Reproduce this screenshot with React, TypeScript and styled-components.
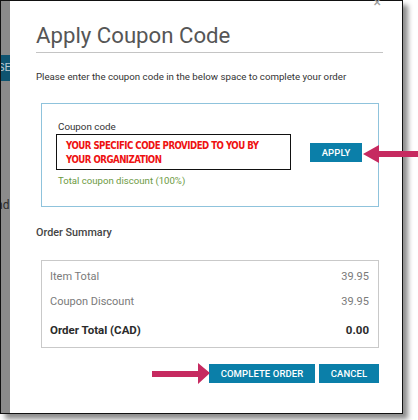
import React from "react";
import styled, { createGlobalStyle } from "styled-components";

const GlobalStyle = createGlobalStyle`
  html, body {
    margin: 0;
    padding: 0;
    background: #ffffff;
    width: 418px;
    height: 420px;
    overflow: hidden;
  }
  * { box-sizing: border-box; }
`;

const Frame = styled.div`
  position: relative;
  width: 403px;
  height: 414px;
  border: 1.5px solid #111;
  display: flex;
  box-shadow: 5px 5px 5px rgba(0, 0, 0, 0.45);
  font-family: Roboto, "Liberation Sans", sans-serif;
`;

const Backdrop = styled.div`
  width: 9px;
  flex-shrink: 0;
  background: #8b8b8b;
  display: flex;
  flex-direction: column;
  overflow: hidden;
`;

const BackdropTab = styled.div`
  margin-top: 54px;
  height: 26px;
  background: #0f5470;
  color: #b9c9d2;
  font-size: 11px;
  line-height: 26px;
  white-space: nowrap;
  text-indent: -3px;
`;

const BackdropText = styled.div`
  margin-top: 117px;
  color: #2a2a2a;
  font-size: 12px;
  white-space: nowrap;
  text-indent: -5px;
`;

const Modal = styled.div`
  position: relative;
  flex: 1;
  background: #fff;
  padding: 19px 19px 0 26px;
  display: flex;
  flex-direction: column;
`;

const Close = styled.span`
  position: absolute;
  top: -6px;
  right: 21px;
  color: #9a9a9a;
  font-size: 14px;
  line-height: 14px;
`;

const Title = styled.h1`
  margin: 0;
  font-size: 22.2px;
  line-height: 30px;
  font-weight: 400;
  color: #565656;
  padding-bottom: 2px;
  border-bottom: 1.5px solid #c4c4c4;
`;

const Lead = styled.p`
  margin: 17px 0 0;
  font-size: 9.7px;
  line-height: 14px;
  color: #333;
  white-space: nowrap;
`;

const CouponBox = styled.div`
  position: relative;
  margin: 19px 4px 0 5px;
  border: 1px solid #8fc3dc;
  padding: 16px 16px 18px 14px;
`;

const Label = styled.div`
  font-size: 9.8px;
  line-height: 14px;
  color: #333;
  padding-left: 2px;
`;

const InputRow = styled.div`
  display: flex;
  align-items: center;
  gap: 19px;
`;

const CodeField = styled.div`
  width: 235px;
  height: 36px;
  border: 1.5px solid #111;
  padding: 4px 0 0 9px;
  color: #ee1111;
  font-family: "DejaVu Sans Condensed", "Liberation Sans", sans-serif;
  font-weight: 700;
  font-size: 9.6px;
  line-height: 14px;
  letter-spacing: -0.5px;
  white-space: nowrap;
`;

const Button = styled.button<{ $w: number }>`
  width: ${(p) => p.$w}px;
  height: 19px;
  padding: 0;
  border: none;
  background: #0b7fa9;
  color: #fff;
  font-family: Roboto, "Liberation Sans", sans-serif;
  font-weight: 500;
  font-size: 9.5px;
  letter-spacing: 0.1px;
  cursor: pointer;
`;

const Discount = styled.div`
  margin-top: 4px;
  padding-left: 2px;
  font-size: 9.6px;
  line-height: 14px;
  color: #6c9a3f;
`;

const SectionHead = styled.h2`
  margin: 19px 0 0;
  font-size: 10.8px;
  line-height: 14px;
  font-weight: 500;
  color: #444;
`;

const SummaryBox = styled.div`
  margin: 20px 4px 0 5px;
  border: 1px solid #c9c9c9;
  padding: 6px 9px 4px 8px;
  display: flex;
  flex-direction: column;
`;

const Row = styled.div<{ $total?: boolean }>`
  display: flex;
  justify-content: space-between;
  height: ${(p) => (p.$total ? 26 : 25)}px;
  padding-top: ${(p) => (p.$total ? 6 : 3)}px;
  font-size: ${(p) => (p.$total ? 11.5 : 11)}px;
  line-height: 14px;
  font-weight: ${(p) => (p.$total ? 700 : 400)};
  color: ${(p) => (p.$total ? "#2b2b2b" : "#7a7a7a")};
`;

const Actions = styled.div`
  position: relative;
  display: flex;
  justify-content: flex-end;
  gap: 4px;
  margin: 16px 4px 0 0;
`;

const Arrow = styled.svg`
  position: absolute;
  overflow: visible;
`;

const ApplyArrow = styled(Arrow)`
  top: 40px;
  right: -41px;
`;

const OrderArrow = styled(Arrow)`
  top: -1px;
  left: 116px;
`;

function LeftArrow() {
  return (
    <ApplyArrow width="56" height="20" viewBox="0 0 56 20">
      <path d="M0 10 L16 1 L16 7 L56 7 L56 13 L16 13 L16 19 Z" fill="#c62a60" />
    </ApplyArrow>
  );
}

function RightArrow() {
  return (
    <OrderArrow width="58" height="22" viewBox="0 0 58 22">
      <path d="M0 8 L46 8 L46 0 L58 10 L46 21 L46 14 L0 14 Z" fill="#c62a60" />
    </OrderArrow>
  );
}

export default function App() {
  return (
    <>
      <GlobalStyle />
      <Frame>
        <Backdrop>
          <BackdropTab>SE</BackdropTab>
          <BackdropText>nd</BackdropText>
        </Backdrop>
        <Modal>
          <Close>×</Close>
          <Title>Apply Coupon Code</Title>
          <Lead>Please enter the coupon code in the below space to complete your order</Lead>
          <CouponBox>
            <Label>Coupon code</Label>
            <InputRow>
              <CodeField>
                YOUR SPECIFIC CODE PROVIDED TO YOU BY
                <br />
                YOUR ORGANIZATION
              </CodeField>
              <Button $w={52}>APPLY</Button>
            </InputRow>
            <Discount>Total coupon discount (100%)</Discount>
            <LeftArrow />
          </CouponBox>
          <SectionHead>Order Summary</SectionHead>
          <SummaryBox>
            <Row>
              <span>Item Total</span>
              <span>39.95</span>
            </Row>
            <Row>
              <span>Coupon Discount</span>
              <span>39.95</span>
            </Row>
            <Row $total>
              <span>Order Total (CAD)</span>
              <span>0.00</span>
            </Row>
          </SummaryBox>
          <Actions>
            <RightArrow />
            <Button $w={106}>COMPLETE ORDER</Button>
            <Button $w={60}>CANCEL</Button>
          </Actions>
        </Modal>
      </Frame>
    </>
  );
}
